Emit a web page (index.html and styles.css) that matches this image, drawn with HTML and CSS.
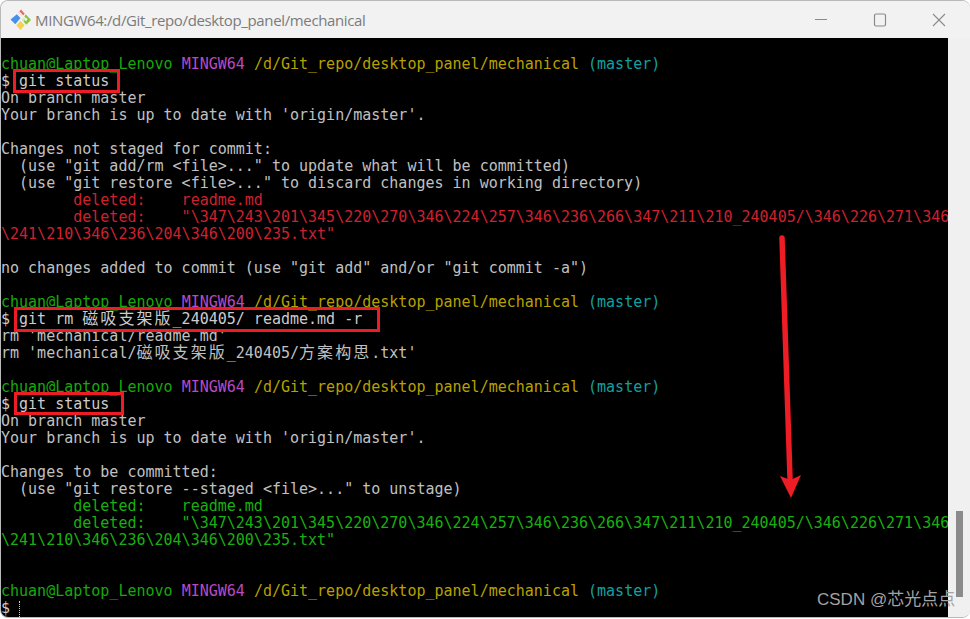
FILE: index.html
```html
<!DOCTYPE html>
<html lang="zh-CN">
<head>
<meta charset="utf-8">
<title>MINGW64:/d/Git_repo/desktop_panel/mechanical</title>
<link rel="stylesheet" href="styles.css">
</head>
<body>
<div class="window">
  <header class="titlebar">
    <svg class="git-icon" viewBox="0 0 20 20" aria-hidden="true">
      <path d="M10.5 0.5 14 4.5 12 7 8 3Z" fill="#ea6a60"/>
      <path d="M15 5 20 10.5 15.5 15 11.5 10.5Z" fill="#8cc63f"/>
      <path d="M10 11.5 14 15.5 10 20 6 15.5Z" fill="#f8cf4e"/>
      <path d="M6.5 5 10 8.5 5 14.5 0.5 10Z" fill="#4a90e8"/>
      <path d="M8.5 2.5 15 9.5M12.5 6.5V12" fill="none" stroke="#f2f2f2" stroke-width="1.2"/>
      <circle cx="15" cy="10" r="1.4" fill="#f2f2f2"/>
    </svg>
    <span class="title">MINGW64:/d/Git_repo/desktop_panel/mechanical</span>
    <div class="controls">
      <svg class="ctl" viewBox="0 0 14 37" aria-hidden="true"><path d="M1 18.5H13" fill="none" stroke="#8a8a8a" stroke-width="1"/></svg>
      <svg class="ctl" viewBox="0 0 14 37" aria-hidden="true"><rect x="1.5" y="13" width="11" height="12" rx="1.5" fill="none" stroke="#8a8a8a" stroke-width="1.2"/></svg>
      <svg class="ctl" viewBox="0 0 14 37" aria-hidden="true"><path d="M1 13 13 25M13 13 1 25" fill="none" stroke="#8a8a8a" stroke-width="1.1"/></svg>
    </div>
  </header>
  <div class="body">
    <pre class="terminal"><code>
<span class="g">chuan@Laptop_Lenovo</span> <span class="m">MINGW64</span> <span class="y">/d/Git_repo/desktop_panel/mechanical</span> <span class="c">(master)</span>
<span class="w">$ git status</span>
On branch master
Your branch is up to date with 'origin/master'.

Changes not staged for commit:
  (use "git add/rm &lt;file&gt;..." to update what will be committed)
  (use "git restore &lt;file&gt;..." to discard changes in working directory)
<span class="r">        deleted:    readme.md</span>
<span class="r">        deleted:    "\347\243\201\345\220\270\346\224\257\346\236\266\347\211\210_240405/\346\226\271\346</span>
<span class="r">\241\210\346\236\204\346\200\235.txt"</span>

no changes added to commit (use "git add" and/or "git commit -a")

<span class="g">chuan@Laptop_Lenovo</span> <span class="m">MINGW64</span> <span class="y">/d/Git_repo/desktop_panel/mechanical</span> <span class="c">(master)</span>
<span class="w">$ git rm <span class="cjk">磁吸支架版</span>_240405/ readme.md -r</span>
rm 'mechanical/readme.md'
rm 'mechanical/<span class="cjk">磁吸支架版</span>_240405/<span class="cjk">方案构思</span>.txt'

<span class="g">chuan@Laptop_Lenovo</span> <span class="m">MINGW64</span> <span class="y">/d/Git_repo/desktop_panel/mechanical</span> <span class="c">(master)</span>
<span class="w">$ git status</span>
On branch master
Your branch is up to date with 'origin/master'.

Changes to be committed:
  (use "git restore --staged &lt;file&gt;..." to unstage)
<span class="gr">        deleted:    readme.md</span>
<span class="gr">        deleted:    "\347\243\201\345\220\270\346\224\257\346\236\266\347\211\210_240405/\346\226\271\346</span>
<span class="gr">\241\210\346\236\204\346\200\235.txt"</span>


<span class="g">chuan@Laptop_Lenovo</span> <span class="m">MINGW64</span> <span class="y">/d/Git_repo/desktop_panel/mechanical</span> <span class="c">(master)</span>
<span class="w">$ </span><span class="cursor"></span></code></pre>
    <div class="scrollbar"><div class="thumb"></div></div>
  </div>
  <div class="mark mark-a"></div>
  <div class="mark mark-b"></div>
  <div class="mark mark-c"></div>
  <svg class="arrow" viewBox="0 0 970 619" aria-hidden="true">
    <path d="M782 238 790 478" fill="none" stroke="#ee1c25" stroke-width="5.5" stroke-linecap="round"/>
    <path d="M780 476 790.5 480 801 475 791 498Z" fill="#ee1c25"/>
  </svg>
  <div class="watermark">CSDN @芯光点点</div>
</div>
</body>
</html>
```

FILE: styles.css
```css
* { box-sizing: border-box; }
html, body { margin: 0; padding: 0; background: #fff; }
body { width: 970px; height: 619px; overflow: hidden; }

.window {
  position: relative;
  width: 970px;
  height: 618px;
  display: flex;
  flex-direction: column;
  background: #f0f0f0;
  border: 1px solid #b9b9b9;
  border-right: 0;
  border-radius: 8px;
  overflow: hidden;
}

.titlebar {
  height: 37px;
  flex: none;
  display: flex;
  align-items: center;
  padding-left: 9px;
  background: #f2f2f2;
}
.git-icon { width: 21px; height: 21px; flex: none; }
.title {
  margin-left: 4px;
  font: 15px "Open Sans", "Noto Sans", sans-serif;
  letter-spacing: -0.36px;
  color: #7b7b7b;
}
.controls { margin-left: auto; display: flex; gap: 45px; padding-right: 24px; }
.ctl { width: 14px; height: 37px; display: block; }

.body { flex: 1; display: flex; min-height: 0; }
.terminal {
  flex: none;
  width: 947px;
  margin: 0;
  padding-top: 1px;
  background: #000;
  color: #c0c0c0;
  overflow: hidden;
  font: 15px/17px "DejaVu Sans Mono", "Noto Sans CJK SC", monospace;
}
.terminal code { font: inherit; }
.g { color: #18a80d; }
.m { color: #b84ac8; }
.y { color: #b8a000; }
.c { color: #10a0a0; }
.w { color: #cccccc; }
.r { color: #cf2030; }
.gr { color: #18b010; }
.cjk { font-family: "Noto Sans CJK SC", sans-serif; font-size: 16px; line-height: 0; letter-spacing: 2.06px; }
.cursor { display: inline-block; width: 1px; height: 16px; vertical-align: text-bottom; border-left: 1px dotted #ccc; }

.scrollbar { flex: 1; position: relative; background: #f0f0f0; padding: 473px 7px 0 8px; }
.thumb { height: 86px; background: #8b8b8b; }

.mark { position: absolute; border: 3px solid #ee1c25; }
.mark-a { left: 12px; top: 68px; width: 107px; height: 24px; }
.mark-b { left: 13px; top: 306px; width: 366px; height: 25px; }
.mark-c { left: 13px; top: 391px; width: 110px; height: 23px; }

.arrow { position: absolute; left: -1px; top: -1px; width: 970px; height: 619px; pointer-events: none; }

.watermark {
  position: absolute;
  left: 816px;
  top: 589px;
  font: 17px/20px "Liberation Sans", "Noto Sans CJK SC", sans-serif;
  color: #a3a3a3;
}
```
